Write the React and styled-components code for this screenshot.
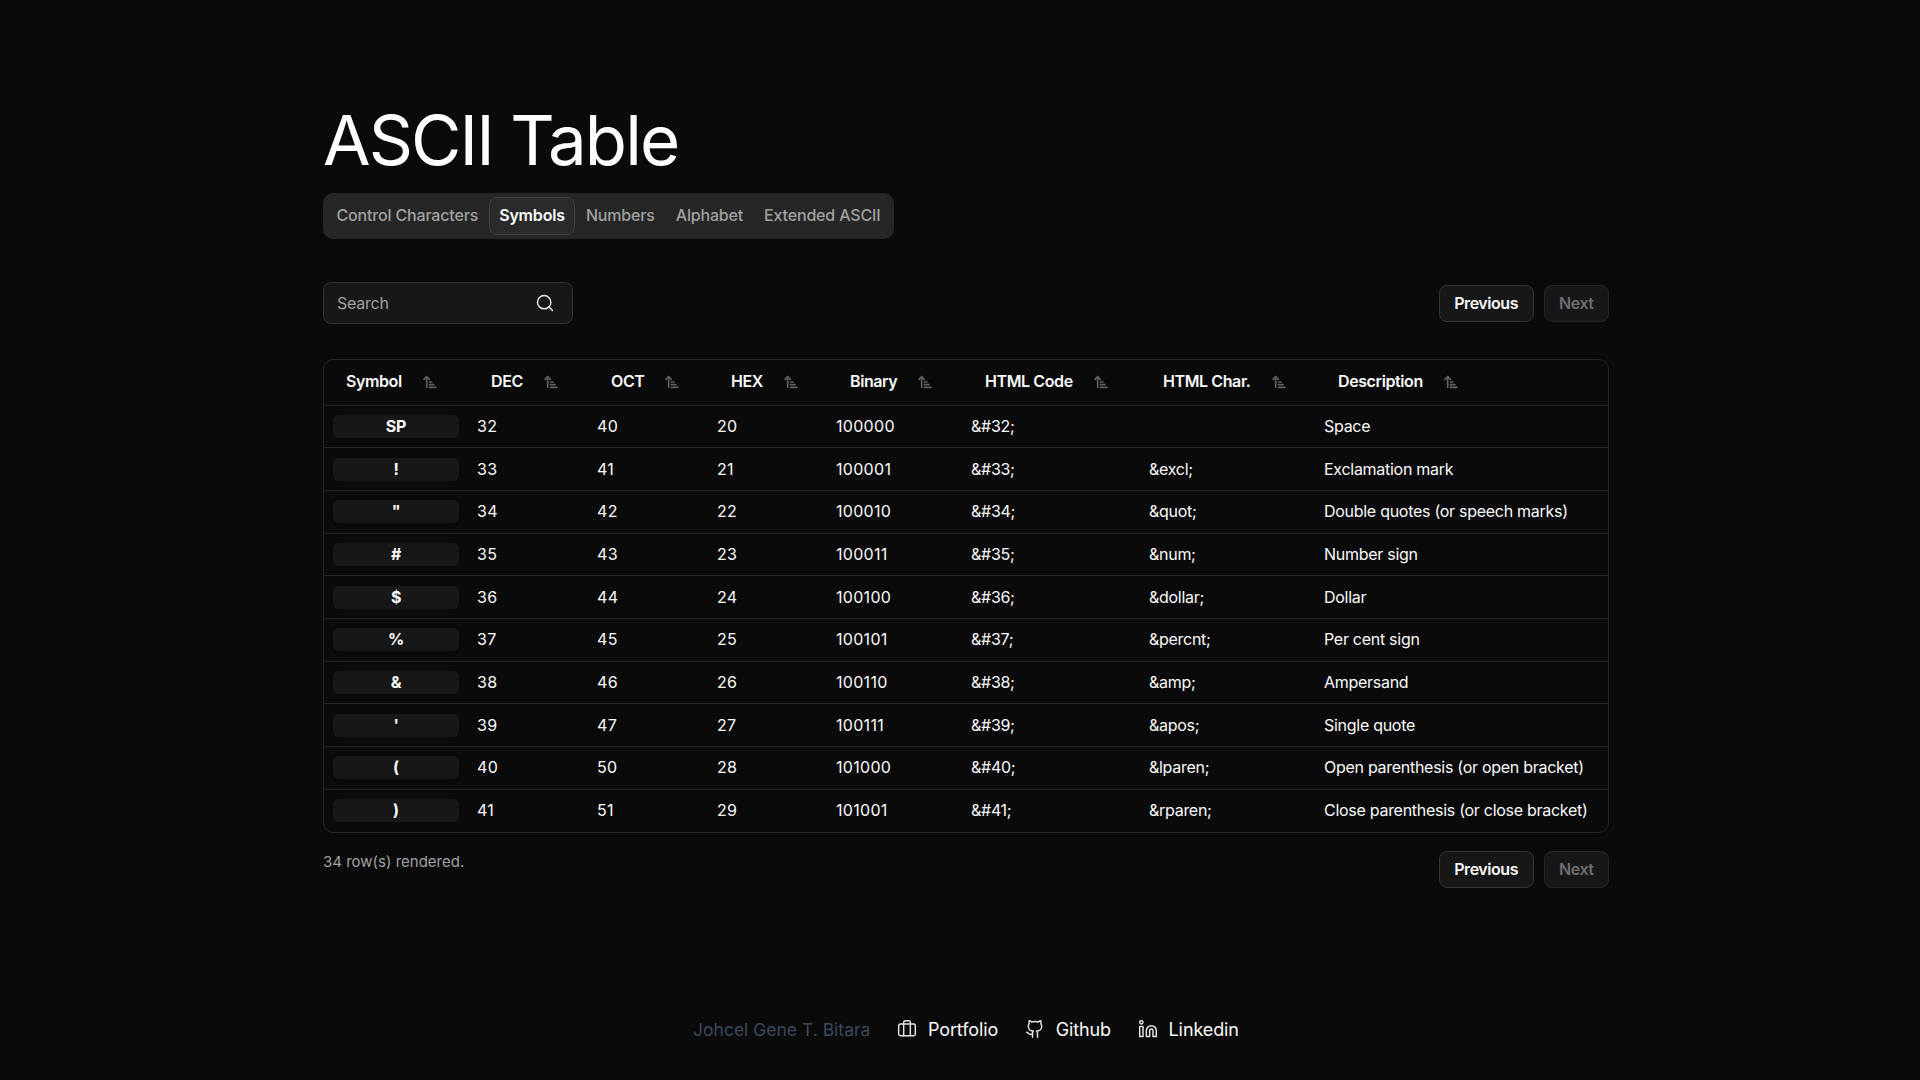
import React from 'react';
import styled, { createGlobalStyle } from 'styled-components';
import { ArrowUpNarrowWide, Briefcase, Github, Linkedin, Search } from 'lucide-react';

const GlobalStyle = createGlobalStyle`
    html, body {
        margin: 0;
        padding: 0;
        background: #0a0a0a;
        color: #fafafa;
        font-family: 'Inter', 'Liberation Sans', sans-serif;
    }

    * {
        box-sizing: border-box;
    }
`;

const Page = styled.div`
    width: 1920px;
    height: 1080px;
    padding: 99px 0 0 12px;
    display: flex;
    flex-direction: column;
    align-items: center;
    overflow: hidden;
`;

const Main = styled.main`
    width: 1286px;
`;

const Title = styled.h1`
    margin: 0 0 11px;
    font-size: 69px;
    line-height: 83px;
    font-weight: 400;
    letter-spacing: -1.9px;
    color: #fff;
`;

const TabList = styled.div`
    display: inline-flex;
    align-items: center;
    height: 46px;
    padding: 4px 3px;
    background: #262626;
    border-radius: 10px;
    margin-bottom: 43px;
    vertical-align: top;
`;

const Tab = styled.button`
    height: 38px;
    padding: 0 9.5px 2px;
    margin: 0;
    border: 1px solid ${({ $active }) => ($active ? '#404040' : 'transparent')};
    border-radius: 8px;
    background: ${({ $active }) => ($active ? '#2a2a2a' : 'transparent')};
    color: ${({ $active }) => ($active ? '#fafafa' : '#a1a1a1')};
    font: ${({ $active }) => ($active ? 600 : 500)} 16px 'Inter', sans-serif;
    letter-spacing: -0.17px;
`;

const Toolbar = styled.div`
    display: flex;
    align-items: center;
    justify-content: space-between;
    height: 42px;
    margin-bottom: 35px;
`;

const SearchBox = styled.label`
    display: flex;
    align-items: center;
    justify-content: space-between;
    width: 250px;
    height: 42px;
    padding: 0 17px 0 13px;
    background: #171717;
    border: 1px solid #333;
    border-radius: 8px;
    color: #e5e5e5;

    span {
        font-size: 16px;
        letter-spacing: -0.25px;
        color: #a1a1a1;
    }
`;

const Pager = styled.div`
    display: flex;
    gap: 10px;
`;

const PagerButton = styled.button`
    height: 37px;
    padding: 0 14.5px;
    background: #171717;
    border: 1px solid ${({ disabled }) => (disabled ? '#262626' : '#333')};
    border-radius: 8px;
    color: ${({ disabled }) => (disabled ? '#6e6e6e' : '#fafafa')};
    font: 600 16px 'Inter', sans-serif;
    letter-spacing: -0.45px;
`;

const TableFrame = styled.div`
    border: 1px solid #262626;
    border-radius: 10px;
    overflow: hidden;
`;

const Table = styled.table`
    width: 1284px;
    table-layout: fixed;
    border-collapse: collapse;
    font-size: 16px;
    letter-spacing: -0.28px;
`;

const HeadRow = styled.tr`
    height: 45px;
    border-bottom: 1px solid #262626;
`;

const Row = styled.tr`
    height: 42.7px;
    border-bottom: 1px solid #262626;

    &:last-child {
        border-bottom: none;
    }
`;

const HeadCell = styled.th`
    padding: 0 0 2px 22px;
    text-align: left;
    font-weight: 600;
    font-size: 16px;
    letter-spacing: -0.4px;
    white-space: nowrap;
    color: #fafafa;
`;

const SortIcon = styled(ArrowUpNarrowWide)`
    width: 16px;
    height: 16px;
    margin-left: 20px;
    color: #5f5f5f;
    stroke-width: 2.5;
    vertical-align: -3px;
`;

const Cell = styled.td`
    padding: 0 8px 1px;
    white-space: nowrap;
    color: #fafafa;
    letter-spacing: ${({ $numeric }) => ($numeric ? '0.3px' : 'inherit')};
`;

const SymbolCell = styled.td`
    padding: 0 8px;
`;

const SymbolBadge = styled.div`
    height: 23px;
    line-height: 23px;
    text-align: center;
    font-weight: 700;
    background: #171717;
    border-radius: 6px;
    margin-left: 1px;
    margin-right: 2px;
`;

const Footnote = styled.div`
    display: flex;
    align-items: flex-start;
    justify-content: space-between;
    margin-top: 18px;
`;

const RowCount = styled.span`
    margin-top: 1px;
    font-size: 15px;
    color: #a1a1a1;
`;

const Footer = styled.footer`
    display: flex;
    align-items: center;
    margin-top: 131px;
    font-size: 18px;
    letter-spacing: -0.1px;
`;

const Author = styled.span`
    font-size: 17.5px;
    letter-spacing: 0;
    color: #3a485c;
    margin-right: 26.5px;
`;

const FooterLink = styled.a`
    display: flex;
    align-items: center;
    gap: 11px;
    margin-right: 26.5px;
    color: #fafafa;

    &:last-child {
        margin-right: 0;
    }

    svg {
        width: 20px;
        height: 20px;
        color: #e5e5e5;
    }
`;

const columns = [
    { label: 'Symbol', width: 145 },
    { label: 'DEC', width: 120 },
    { label: 'OCT', width: 120 },
    { label: 'HEX', width: 119 },
    { label: 'Binary', width: 135 },
    { label: 'HTML Code', width: 178 },
    { label: 'HTML Char.', width: 175 },
    { label: 'Description', width: 292 },
];

const rows = [
    ['SP', '32', '40', '20', '100000', '&#32;', '', 'Space'],
    ['!', '33', '41', '21', '100001', '&#33;', '&excl;', 'Exclamation mark'],
    ['"', '34', '42', '22', '100010', '&#34;', '&quot;', 'Double quotes (or speech marks)'],
    ['#', '35', '43', '23', '100011', '&#35;', '&num;', 'Number sign'],
    ['$', '36', '44', '24', '100100', '&#36;', '&dollar;', 'Dollar'],
    ['%', '37', '45', '25', '100101', '&#37;', '&percnt;', 'Per cent sign'],
    ['&', '38', '46', '26', '100110', '&#38;', '&amp;', 'Ampersand'],
    ["'", '39', '47', '27', '100111', '&#39;', '&apos;', 'Single quote'],
    ['(', '40', '50', '28', '101000', '&#40;', '&lparen;', 'Open parenthesis (or open bracket)'],
    [')', '41', '51', '29', '101001', '&#41;', '&rparen;', 'Close parenthesis (or close bracket)'],
];

const tabs = ['Control Characters', 'Symbols', 'Numbers', 'Alphabet', 'Extended ASCII'];

const PagerButtons = () => (
    <Pager>
        <PagerButton>Previous</PagerButton>
        <PagerButton disabled>Next</PagerButton>
    </Pager>
);

const App = () => (
    <Page>
        <GlobalStyle />
        <Main>
            <Title>ASCII Table</Title>
            <TabList>
                {tabs.map((tab) => (
                    <Tab key={tab} $active={tab === 'Symbols'}>
                        {tab}
                    </Tab>
                ))}
            </TabList>
            <Toolbar>
                <SearchBox>
                    <span>Search</span>
                    <Search size={20} strokeWidth={1.75} />
                </SearchBox>
                <PagerButtons />
            </Toolbar>
            <TableFrame>
                <Table>
                    <colgroup>
                        {columns.map((col) => (
                            <col key={col.label} width={col.width} />
                        ))}
                    </colgroup>
                    <thead>
                        <HeadRow>
                            {columns.map((col) => (
                                <HeadCell key={col.label}>
                                    {col.label}
                                    <SortIcon />
                                </HeadCell>
                            ))}
                        </HeadRow>
                    </thead>
                    <tbody>
                        {rows.map(([symbol, ...rest]) => (
                            <Row key={rest[0]}>
                                <SymbolCell>
                                    <SymbolBadge>{symbol}</SymbolBadge>
                                </SymbolCell>
                                {rest.map((value, i) => (
                                    <Cell key={i} $numeric={i < 4}>
                                        {value}
                                    </Cell>
                                ))}
                            </Row>
                        ))}
                    </tbody>
                </Table>
            </TableFrame>
            <Footnote>
                <RowCount>34 row(s) rendered.</RowCount>
                <PagerButtons />
            </Footnote>
        </Main>
        <Footer>
            <Author>Johcel Gene T. Bitara</Author>
            <FooterLink>
                <Briefcase strokeWidth={1.75} />
                Portfolio
            </FooterLink>
            <FooterLink>
                <Github strokeWidth={1.75} />
                Github
            </FooterLink>
            <FooterLink>
                <Linkedin strokeWidth={1.75} />
                Linkedin
            </FooterLink>
        </Footer>
    </Page>
);

export default App;
